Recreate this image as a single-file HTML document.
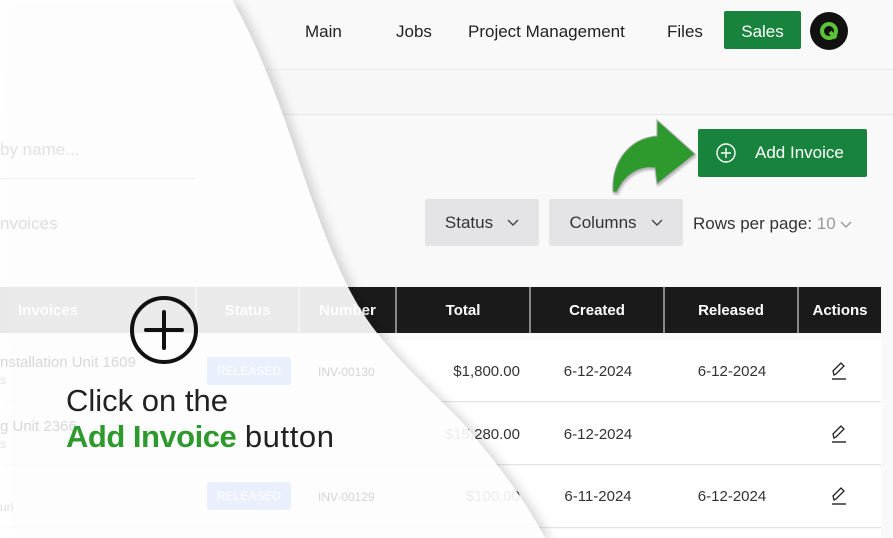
<!DOCTYPE html>
<html><head><meta charset="utf-8"><style>
*{margin:0;padding:0;box-sizing:border-box}
html,body{width:893px;height:538px;overflow:hidden}
body{background:#f9f9f9;font-family:"Liberation Sans",sans-serif;position:relative;color:#222}
.a{position:absolute}
.nav{font-size:17px;color:#222;top:22px}
.btn{background:#e4e4e7;border-radius:2px;font-size:17px;color:#333;display:flex;align-items:center;justify-content:center;gap:14px}
.th{background:#1a1a1b;color:#fff;font-weight:bold;font-size:15px;height:46px;top:287px;display:flex;align-items:center;justify-content:center;border-right:2px solid #888}
.td{font-size:15px;color:#333}
.row{left:0;width:881px;height:62px;background:#fff;border-bottom:1px solid #e3e3ea}
.badge{background:#e9effd;color:#fff;font-size:12px;width:84px;height:28px;display:flex;align-items:center;justify-content:center;border-radius:3px}
.fd{font-size:14px;color:#d4d4d4}
</style></head><body>
<div class="a" style="left:0;top:0;width:893px;height:70px;background:#f9f9f9;border-bottom:1px solid #ececec"></div>
<div class="a" style="left:0;top:70px;width:893px;height:45px;background:#f7f7f7;border-bottom:1px solid #e6e6e6"></div>
<div class="a nav" style="left:305px">Main</div>
<div class="a nav" style="left:396px">Jobs</div>
<div class="a nav" style="left:468px">Project Management</div>
<div class="a nav" style="left:667px">Files</div>
<div class="a" style="left:724px;top:11px;width:77px;height:38px;background:#18833c;border-radius:2px;color:#fff;font-size:17px;display:flex;align-items:center;justify-content:center;padding-top:3px">Sales</div>
<div class="a" style="left:810px;top:12px;width:38px;height:38px;border-radius:50%;background:#111;display:flex;align-items:center;justify-content:center">
<svg width="22" height="22" viewBox="0 0 22 22"><circle cx="11" cy="11" r="7" fill="none" stroke="#5bc236" stroke-width="4"/><path d="M12 12 L18 18" stroke="#5bc236" stroke-width="4"/></svg></div>
<div class="a" style="left:698px;top:129px;width:169px;height:48px;background:#18833c;border-radius:2px;color:#fff;font-size:17px;display:flex;align-items:center">
<svg style="margin-left:18px" width="20" height="20" viewBox="0 0 20 20"><circle cx="10" cy="10" r="9" fill="none" stroke="#fff" stroke-width="1.4"/><path d="M10 5v10M5 10h10" stroke="#fff" stroke-width="1.4"/></svg>
<span style="margin-left:19px">Add Invoice</span></div>
<svg class="a" style="left:605px;top:116px" width="95" height="82" viewBox="0 0 95 82"><path d="M8 76 C6 45 25 22 52 20 L52 4 L90 38 L52 68 L50 52 C35 50 20 58 12 76 Z" fill="#2e9a2e" stroke="#aaa" stroke-width="1" style="filter:drop-shadow(1px 2px 1px rgba(0,0,0,.25))"/></svg>
<div class="a btn" style="left:425px;top:199px;width:114px;height:47px">Status <svg width="12" height="8"><path d="M1 1l5 5 5-5" fill="none" stroke="#444" stroke-width="1.4"/></svg></div>
<div class="a btn" style="left:549px;top:199px;width:134px;height:47px">Columns <svg width="12" height="8"><path d="M1 1l5 5 5-5" fill="none" stroke="#444" stroke-width="1.4"/></svg></div>
<div class="a" style="left:693px;top:214px;font-size:17px;color:#333">Rows per page: <span style="color:#999">10</span> <svg width="12" height="8"><path d="M1 1l5 5 5-5" fill="none" stroke="#999" stroke-width="1.4"/></svg></div>
<div class="a th" style="left:0;width:197px;justify-content:flex-start;padding-left:18px">Invoices</div>
<div class="a th" style="left:197px;width:103px">Status</div>
<div class="a th" style="left:300px;width:97px">Number</div>
<div class="a th" style="left:397px;width:134px">Total</div>
<div class="a th" style="left:531px;width:134px">Created</div>
<div class="a th" style="left:665px;width:134px">Released</div>
<div class="a th" style="left:799px;width:82px;border-right:none">Actions</div>
<div class="a row" style="top:340px"></div>
<div class="a row" style="top:403px"></div>
<div class="a row" style="top:466px"></div>
<div class="a row" style="top:529px;height:9px;border-bottom:none"></div>
<div class="a td" style="left:397px;width:123px;text-align:right;top:363px">$1,800.00</div>
<div class="a td" style="left:397px;width:123px;text-align:right;top:426px">$15,280.00</div>
<div class="a td" style="left:397px;width:123px;text-align:right;top:488px">$100.00</div>
<div class="a td" style="left:531px;width:134px;text-align:center;top:363px">6-12-2024</div>
<div class="a td" style="left:531px;width:134px;text-align:center;top:426px">6-12-2024</div>
<div class="a td" style="left:531px;width:134px;text-align:center;top:488px">6-11-2024</div>
<div class="a td" style="left:665px;width:134px;text-align:center;top:363px">6-12-2024</div>
<div class="a td" style="left:665px;width:134px;text-align:center;top:488px">6-12-2024</div>
<svg class="a" style="left:830px;top:361px" width="18" height="20" viewBox="0 0 18 20"><path d="M4 14 L3 10 L11 2 L14 5 L6 13 Z" fill="none" stroke="#222" stroke-width="1.3"/><path d="M2 18h14" stroke="#222" stroke-width="1.4"/></svg>
<svg class="a" style="left:830px;top:424px" width="18" height="20" viewBox="0 0 18 20"><path d="M4 14 L3 10 L11 2 L14 5 L6 13 Z" fill="none" stroke="#222" stroke-width="1.3"/><path d="M2 18h14" stroke="#222" stroke-width="1.4"/></svg>
<svg class="a" style="left:830px;top:486px" width="18" height="20" viewBox="0 0 18 20"><path d="M4 14 L3 10 L11 2 L14 5 L6 13 Z" fill="none" stroke="#222" stroke-width="1.3"/><path d="M2 18h14" stroke="#222" stroke-width="1.4"/></svg>
<svg class="a" style="left:0;top:0" width="893" height="538" viewBox="0 0 893 538">
<defs><filter id="sh" x="-10%" y="-10%" width="130%" height="130%"><feDropShadow dx="6" dy="2" stdDeviation="5" flood-color="#000" flood-opacity="0.18"/></filter></defs>
<path d="M0 0 L232 0 C255 40 275 90 295 150 C315 210 335 265 355 300 C380 345 420 380 460 420 C495 460 525 500 545 538 L0 538 Z" fill="rgba(255,255,255,0.9)" filter="url(#sh)"/>
</svg>
<div class="a" style="left:0;top:140px;font-size:17px;color:#e2e2e2">by name...</div>
<div class="a" style="left:0;top:178px;width:195px;height:1px;background:#f0f0f0"></div>
<div class="a" style="left:0;top:214px;font-size:17px;color:#dedede">nvoices</div>
<div class="a" style="left:0;top:354px;font-size:15px;color:#d8d8d8">nstallation Unit 1609</div>
<div class="a" style="left:0;top:373px;font-size:12px;color:#e0e0e0">s</div>
<div class="a" style="left:0;top:418px;font-size:15px;color:#d8d8d8">g Unit 2366</div>
<div class="a" style="left:0;top:437px;font-size:12px;color:#e0e0e0">s</div>
<div class="a" style="left:0;top:500px;font-size:12px;color:#e0e0e0">uri</div>
<div class="a badge" style="left:207px;top:357px">RELEASED</div>
<div class="a badge" style="left:207px;top:482px">RELEASED</div>
<div class="a fd" style="left:318px;top:365px;font-size:12px">INV-00130</div>
<div class="a fd" style="left:318px;top:490px;font-size:12px">INV-00129</div>
<svg class="a" style="left:128px;top:294px" width="72" height="72" viewBox="0 0 72 72">
<circle cx="36" cy="36" r="32" fill="none" stroke="#111" stroke-width="4"/>
<path d="M36 18v36M18 36h36" stroke="#111" stroke-width="4" stroke-linecap="round"/></svg>
<div class="a" style="left:66px;top:383px;font-size:31px;color:#222;letter-spacing:0px;line-height:36px;white-space:nowrap">Click on the<br><span style="color:#2e9a2e;font-weight:bold;letter-spacing:-0.5px">Add Invoice</span> <span style="letter-spacing:0.6px">button</span></div>
</body></html>
